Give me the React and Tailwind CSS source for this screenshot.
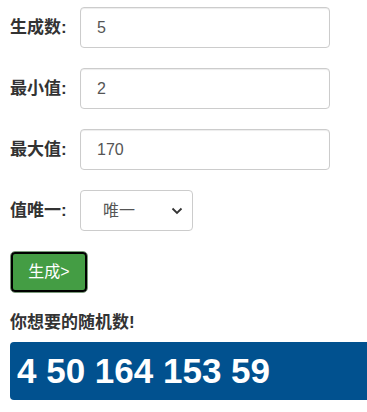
import React from "react";

function Row({ label, children }) {
  return (
    <div className="flex items-center h-[41px]">
      <label className="w-[70px] text-[17px] font-bold text-[#333]">{label}</label>
      {children}
    </div>
  );
}

export default function App() {
  return (
    <div className="bg-white w-[367px] h-[412px] overflow-hidden font-['Liberation_Sans','Noto_Sans_CJK_SC',sans-serif] pl-[10px] pt-[7px]">
      <div className="flex flex-col gap-[20px]">
        <Row label="生成数:">
          <div className="w-[250px] h-[41px] border border-[#ccc] rounded-[4px] flex items-center pl-[16px] text-[16px] text-[#555] shadow-[inset_0_1px_1px_rgba(0,0,0,0.075)]">5</div>
        </Row>
        <Row label="最小值:">
          <div className="w-[250px] h-[41px] border border-[#ccc] rounded-[4px] flex items-center pl-[16px] text-[16px] text-[#555] shadow-[inset_0_1px_1px_rgba(0,0,0,0.075)]">2</div>
        </Row>
        <Row label="最大值:">
          <div className="w-[250px] h-[41px] border border-[#ccc] rounded-[4px] flex items-center pl-[16px] text-[16px] text-[#555] shadow-[inset_0_1px_1px_rgba(0,0,0,0.075)]">170</div>
        </Row>
        <Row label="值唯一:">
          <div className="w-[113px] h-[41px] border border-[#ccc] rounded-[4px] flex items-center pl-[22px] pr-[8px] text-[16px] text-[#555] justify-between">
            <span>唯一</span>
            <svg width="12" height="8" viewBox="0 0 12 8" className="mr-[1px]">
              <path d="M1.5 1.5 L6 6 L10.5 1.5" fill="none" stroke="#333" strokeWidth="1.8" />
            </svg>
          </div>
        </Row>
      </div>
      <div className="mt-[20px] w-[78px] h-[42px] rounded-[5px] border border-[#7a9a7a] p-0">
        <div className="w-full h-full rounded-[4px] border-2 border-black bg-[#449d44] text-white text-[16px] flex items-center justify-center">
          生成&gt;
        </div>
      </div>
      <div className="mt-[20px] text-[17px] font-bold text-[#333] leading-[20px]">你想要的随机数!</div>
      <div className="mt-[9px] h-[58px] bg-[#01518f] rounded-l-[4px] flex items-center pl-[7px] text-white text-[35px] font-bold">
        4 50 164 153 59
      </div>
    </div>
  );
}
